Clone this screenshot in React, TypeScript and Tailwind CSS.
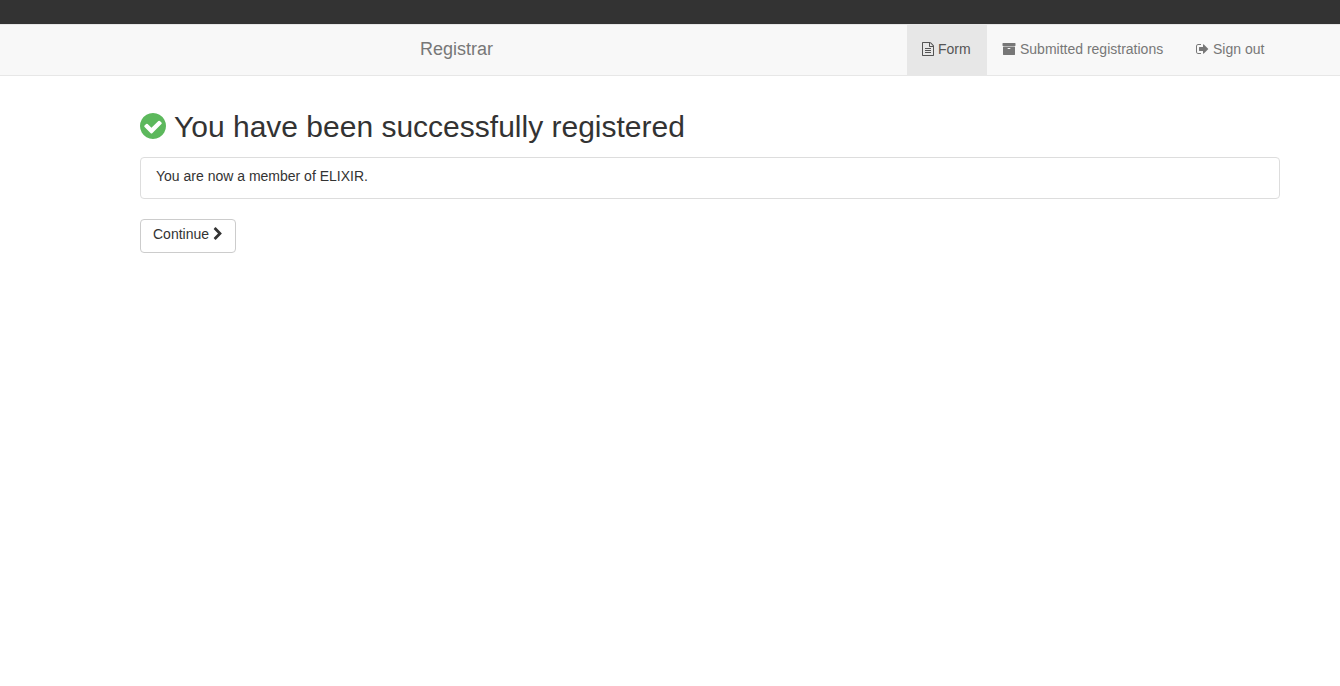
import type { ReactNode } from "react";

type IconProps = { viewBox: string; path: string; className: string };

function Icon({ viewBox, path, className }: IconProps) {
  return (
    <svg className={`shrink-0 ${className}`} viewBox={viewBox} fill="currentColor" aria-hidden="true">
      <path d={path} />
    </svg>
  );
}

const fileText =
  "M1596 380q28 28 48 76t20 88v1152q0 40-28 68t-68 28h-1344q-40 0-68-28t-28-68v-1600q0-40 28-68t68-28h896q40 0 88 20t76 48zm-444-244v376h376q-10-29-22-41l-313-313q-12-12-41-22zm384 1528v-1024h-416q-40 0-68-28t-28-68v-416h-768v1536h1280zm-1024-864q0-14 9-23t23-9h704q14 0 23 9t9 23v64q0 14-9 23t-23 9h-704q-14 0-23-9t-9-23v-64zm736 224q14 0 23 9t9 23v64q0 14-9 23t-23 9h-704q-14 0-23-9t-9-23v-64q0-14 9-23t23-9h704zm0 256q14 0 23 9t9 23v64q0 14-9 23t-23 9h-704q-14 0-23-9t-9-23v-64q0-14 9-23t23-9h704z";
const archive =
  "M1088 832q0-26-19-45t-45-19h-256q-26 0-45 19t-19 45 19 45 45 19h256q26 0 45-19t19-45zm576-192v960q0 26-19 45t-45 19h-1408q-26 0-45-19t-19-45v-960q0-26 19-45t45-19h1408q26 0 45 19t19 45zm64-448v256q0 26-19 45t-45 19h-1536q-26 0-45-19t-19-45v-256q0-26 19-45t45-19h1536q26 0 45 19t19 45z";
const signOut =
  "M704 1440q0 4 1 20t.5 26.5-3 23.5-10 19.5-20.5 6.500h-320q-119 0-203.500-84.500t-84.500-203.500v-704q0-119 84.500-203.500t203.500-84.500h320q13 0 22.500 9.500t9.500 22.500q0 4 1 20t.5 26.500-3 23.500-10 19.500-20.500 6.500h-320q-66 0-113 47t-47 113v704q0 66 47 113t113 47h312l11.500 1 11.500 3 8 5.500 7 9 2 13.500zm928-544q0 26-19 45l-544 544q-19 19-45 19t-45-19-19-45v-288h-448q-26 0-45-19t-19-45v-384q0-26 19-45t45-19h448v-288q0-26 19-45t45-19 45 19l544 544q19 19 19 45z";
const checkCircle =
  "M1412 734q0-28-18-46l-91-90q-19-19-45-19t-45 19l-408 407-226-226q-19-19-45-19t-45 19l-91 90q-18 18-18 46 0 27 18 45l362 362q19 19 45 19 27 0 46-19l543-543q18-18 18-45zm252 162q0 209-103 385.500t-279.500 279.500-385.500 103-385.500-103-279.500-279.500-103-385.500 103-385.500 279.500-279.500 385.500-103 385.500 103 279.500 279.500 103 385.500z";
const chevronRight =
  "M1363 877l-742 742q-19 19-45 19t-45-19l-166-166q-19-19-19-45t19-45l531-531-531-531q-19-19-19-45t19-45l166-166q19-19 45-19t45 19l742 742q19 19 19 45t-19 45z";

type NavItemProps = { icon: ReactNode; children: ReactNode; width: string; active?: boolean };

function NavItem({ icon, children, width, active = false }: NavItemProps) {
  return (
    <li className={width}>
      <a
        href="#"
        aria-current={active ? "page" : undefined}
        className={`flex h-[50px] items-center gap-1 px-[15px] pb-0.5 ${active ? "bg-[#e7e7e7] text-[#555]" : "text-[#777]"}`}
      >
        {icon}
        <span>{children}</span>
      </a>
    </li>
  );
}

export default function App() {
  return (
    <div className="min-h-screen bg-white font-['Liberation_Sans',Arial,sans-serif] text-sm leading-5 text-[#333]">
      <div className="h-6 bg-[#333]" />
      <nav className="border-y border-[#e7e7e7] bg-[#f8f8f8] pr-15 pl-[405px]">
        <div className="flex items-center justify-between">
          <a href="#" className="px-[15px] pb-0.5 text-lg leading-5 text-[#777]">
            Registrar
          </a>
          <ul className="flex">
            <NavItem width="min-w-20" active icon={<Icon viewBox="128 0 1536 1792" path={fileText} className="h-3.5 w-3" />}>
              Form
            </NavItem>
            <NavItem width="min-w-[194px]" icon={<Icon viewBox="0 0 1792 1792" path={archive} className="size-3.5" />}>
              Submitted registrations
            </NavItem>
            <NavItem width="min-w-[99px]" icon={<Icon viewBox="64 0 1664 1792" path={signOut} className="h-3.5 w-[13px]" />}>
              Sign out
            </NavItem>
          </ul>
        </div>
      </nav>
      <main className="pt-[34px] pr-15 pl-35">
        <h1 className="flex items-center gap-2 text-3xl leading-[34px]">
          <Icon viewBox="128 128 1536 1536" path={checkCircle} className="mb-0.5 size-[26px] text-[#5cb85c]" />
          <span>You have been successfully registered</span>
        </h1>
        <div className="mt-[13px] rounded border border-[#ddd] px-[15px] pt-2 pb-3">
          <p>You are now a member of ELIXIR.</p>
        </div>
        <button type="button" className="mt-5 flex items-center gap-1 rounded border border-[#ccc] px-3 pt-1 pb-2">
          <span>Continue</span>
          <Icon viewBox="256 0 1280 1792" path={chevronRight} className="h-3.5 w-2.5" />
        </button>
      </main>
    </div>
  );
}
